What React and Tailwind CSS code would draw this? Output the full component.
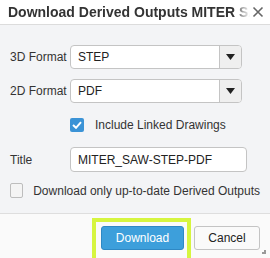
import { useState } from "react";

const SelectBox = ({ value }) => {
  return (
    <div className="flex h-[24px] w-[172px] overflow-hidden rounded-[4px] border border-[#c4c4c4] bg-white">
      <div className="flex flex-1 items-center pl-[7px] text-[12px] text-[#222]">{value}</div>
      <div className="flex w-[22px] items-center justify-center border-l border-[#c4c4c4] bg-[#efefef]">
        <svg width="9" height="6" viewBox="0 0 9 6">
          <path d="M0 0 L9 0 L4.5 6 Z" fill="#222" />
        </svg>
      </div>
    </div>
  );
};

const App = () => {
  const [linked, setLinked] = useState(true);
  const [upToDate, setUpToDate] = useState(false);

  return (
    <div className="relative flex h-[258px] w-[270px] flex-col overflow-hidden bg-[#f3f4f6] font-['Liberation_Sans',Arial,sans-serif] text-[12px] leading-[14px] text-[#333]">
      <div className="flex h-[25px] shrink-0 items-center border-b border-[#dcdcdc] bg-white pl-[8px] pr-[6px]">
        <div className="flex-1 overflow-hidden whitespace-nowrap text-[14px] font-bold leading-[18px] text-[#333] [mask-image:linear-gradient(to_right,black_93%,transparent)]">
          Download Derived Outputs MITER SAW
        </div>
        <svg width="12" height="12" viewBox="0 0 12 12" className="ml-[2px]">
          <path d="M1.5 1.5 L10.5 10.5 M10.5 1.5 L1.5 10.5" stroke="#666" strokeWidth="1.6" />
        </svg>
      </div>

      <div className="flex flex-col px-[10px] pt-[20px]">
        <div className="flex items-center">
          <span className="w-[60px]">3D Format</span>
          <SelectBox value="STEP" />
        </div>
        <div className="mt-[10px] flex items-center">
          <span className="w-[60px]">2D Format</span>
          <SelectBox value="PDF" />
        </div>
        <div className="mt-[15px] flex h-[14px] items-center pl-[60px]">
          <button
            onClick={() => setLinked(!linked)}
            className={
              linked
                ? "flex h-[14px] w-[14px] items-center justify-center rounded-[2px] bg-[#3b93d6]"
                : "h-[14px] w-[14px] rounded-[2px] border border-[#bbb] bg-[#f5f5f5]"
            }
          >
            {linked && (
              <svg width="10" height="8" viewBox="0 0 10 8">
                <path d="M1 4 L4 6.8 L9 1.2" stroke="white" strokeWidth="2" fill="none" />
              </svg>
            )}
          </button>
          <span className="ml-[11px]">Include Linked Drawings</span>
        </div>
        <div className="mt-[15px] flex items-center">
          <span className="w-[60px]">Title</span>
          <div className="flex h-[25px] w-[177px] items-center rounded-[4px] border border-[#c4c4c4] bg-white pl-[7px] text-[#222]">
            MITER_SAW-STEP-PDF
          </div>
        </div>
        <div className="mt-[11px] flex h-[15px] items-center">
          <button
            onClick={() => setUpToDate(!upToDate)}
            className="h-[15px] w-[14px] rounded-[2px] border border-[#bdbdbd] bg-[#f4f4f4]"
          />
          <span className="ml-[10px] whitespace-nowrap">Download only up-to-date Derived Outputs</span>
        </div>
      </div>

      <div className="mt-[15px] flex flex-1 items-start justify-end border-t border-[#dedede] bg-[#fafafa] pr-[10px] pt-[4px]">
        <div className="h-[50px] border-4 border-[#d6f53f] pl-[5px] pr-[3px] pt-[4px]">
          <button className="h-[24px] w-[83px] rounded-[3px] border border-[#2f88c4] bg-[#3d9fdb] text-[12px] text-white">
            Download
          </button>
        </div>
        <button className="ml-[3px] mt-[8px] h-[24px] w-[66px] rounded-[3px] border border-[#c4c4c4] bg-[#fafafa] text-[12px] text-[#222]">
          Cancel
        </button>
      </div>

      <div className="absolute bottom-[4px] right-[4px] h-[4px] w-[4px] border-b-2 border-r-2 border-[#999]" />
    </div>
  );
};

export default App;
